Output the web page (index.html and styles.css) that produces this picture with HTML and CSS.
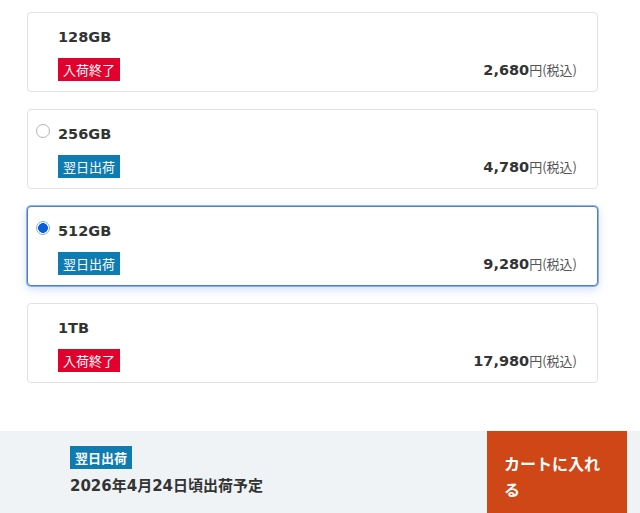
FILE: index.html
```html
<!DOCTYPE html>
<html lang="ja">
<head>
<meta charset="utf-8">
<link rel="stylesheet" href="styles.css">
</head>
<body>
<div class="options">
  <div class="card">
    <span class="radio-slot"></span>
    <div class="content">
      <div class="title">128GB</div>
      <div class="row">
        <span class="badge badge-red">入荷終了</span>
        <span class="price"><b>2,680</b><span class="unit">円(税込)</span></span>
      </div>
    </div>
  </div>
  <div class="card">
    <span class="radio"></span>
    <div class="content">
      <div class="title">256GB</div>
      <div class="row">
        <span class="badge badge-blue">翌日出荷</span>
        <span class="price"><b>4,780</b><span class="unit">円(税込)</span></span>
      </div>
    </div>
  </div>
  <div class="card card-selected">
    <span class="radio radio-checked"></span>
    <div class="content">
      <div class="title">512GB</div>
      <div class="row">
        <span class="badge badge-blue">翌日出荷</span>
        <span class="price"><b>9,280</b><span class="unit">円(税込)</span></span>
      </div>
    </div>
  </div>
  <div class="card">
    <span class="radio-slot"></span>
    <div class="content">
      <div class="title">1TB</div>
      <div class="row">
        <span class="badge badge-red">入荷終了</span>
        <span class="price"><b>17,980</b><span class="unit">円(税込)</span></span>
      </div>
    </div>
  </div>
</div>
<div class="cartbar">
  <div class="ship">
    <span class="badge badge-blue badge-bold">翌日出荷</span>
    <div class="date">2026年4月24日頃出荷予定</div>
  </div>
  <button class="cart-btn">カートに入れる</button>
</div>
</body>
</html>
```
FILE: styles.css
```css
html, body {
  margin: 0;
  padding: 0;
  background: #fff;
  font-family: "DejaVu Sans", "Noto Sans CJK JP", sans-serif;
  color: #333;
  overflow: hidden;
}

.options {
  padding: 12px 42px 0 27px;
  display: flex;
  flex-direction: column;
  gap: 17px;
}

.card {
  box-sizing: border-box;
  height: 80px;
  border: 1px solid #e2e2e2;
  border-radius: 4px;
  display: flex;
  align-items: flex-start;
  padding: 14px 20px 10px 8px;
  background: #fff;
}

.card-selected {
  border-color: #4d80c2;
  box-shadow: 0 0 0 1px rgba(77, 128, 194, 0.55), 0 3px 10px rgba(70, 130, 220, 0.28);
}

.radio-slot, .radio {
  flex: 0 0 14px;
  width: 14px;
  height: 14px;
  margin-right: 8px;
  box-sizing: border-box;
  border-radius: 50%;
}

.radio {
  border: 1px solid #b4b4b4;
  background: #fff;
}

.radio-checked {
  border: 1px solid #86aee6;
  background: radial-gradient(circle, #0a5ed8 0 4.6px, #fff 5.2px);
}

.content {
  flex: 1;
  display: flex;
  flex-direction: column;
}

.title {
  font-size: 14.5px;
  font-weight: bold;
  line-height: 20px;
  color: #333;
}

.row {
  margin-top: 11px;
  display: flex;
  justify-content: space-between;
  align-items: center;
}

.badge {
  display: inline-block;
  height: 23px;
  line-height: 23px;
  padding: 0 5px;
  font-family: "Noto Sans CJK JP", sans-serif;
  font-size: 13px;
  color: #fff;
  white-space: nowrap;
}

.badge-red {
  background: #e2002d;
}

.badge-blue {
  background: #0f7cb1;
}

.price {
  white-space: nowrap;
  color: #333;
}

.price b {
  font-size: 14.5px;
  font-weight: bold;
}

.unit {
  font-family: "Noto Sans CJK JP", sans-serif;
  font-size: 13px;
  color: #555;
}

.cartbar {
  margin-top: 48px;
  height: 90px;
  background: #f0f3f6;
  display: flex;
  justify-content: space-between;
  align-items: flex-start;
  padding: 0 13px 0 70px;
}

.ship {
  padding-top: 15px;
  display: flex;
  flex-direction: column;
  align-items: flex-start;
}

.badge-bold {
  height: 23px;
  line-height: 23px;
  font-weight: bold;
  padding: 0 5px;
}

.date {
  margin-top: 6px;
  font-size: 15px;
  font-weight: bold;
  line-height: 22px;
  color: #333;
}

.cart-btn {
  width: 140px;
  height: 90px;
  border: none;
  margin: 0;
  background: #cf4716;
  color: #fff;
  font-family: "Noto Sans CJK JP", sans-serif;
  font-weight: bold;
  font-size: 16px;
  line-height: 26px;
  text-align: left;
  padding: 19px 20px 0 17px;
  box-sizing: border-box;
  display: flex;
  align-items: flex-start;
  align-self: stretch;
}
```
